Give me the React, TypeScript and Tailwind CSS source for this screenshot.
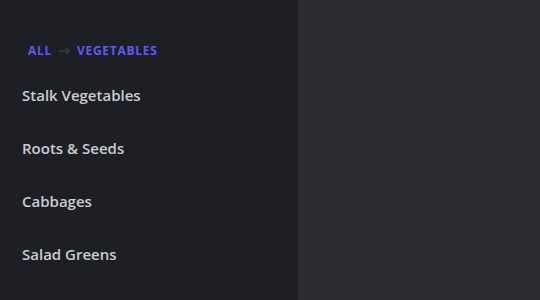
const items = ["Stalk Vegetables", "Roots & Seeds", "Cabbages", "Salad Greens"];

export default function App() {
  return (
    <div className="flex h-[300px] w-[540px] bg-[#2a2b31] font-['Open_Sans',sans-serif]">
      <div className="w-[298px] bg-[#1e1f24] pt-[42px]">
        <div className="flex items-center pl-[28px] text-[12px] font-bold tracking-[0.06em] text-[#5c5cf2]">
          <span>ALL</span>
          <svg
            className="mx-[7px] text-[#3d3f47]"
            width="11"
            height="8"
            viewBox="0 0 11 8"
            fill="none"
            stroke="currentColor"
            strokeWidth="1.3"
          >
            <path d="M0 4h10M7 1l3 3-3 3" />
          </svg>
          <span>VEGETABLES</span>
        </div>
        <ul className="pt-[9px]">
          {items.map((item) => (
            <li
              key={item}
              className="flex h-[53px] items-center pl-[22px] text-[15px] font-semibold text-[#c9ccd3]"
            >
              {item}
            </li>
          ))}
        </ul>
      </div>
      <div className="flex-1" />
    </div>
  );
}
